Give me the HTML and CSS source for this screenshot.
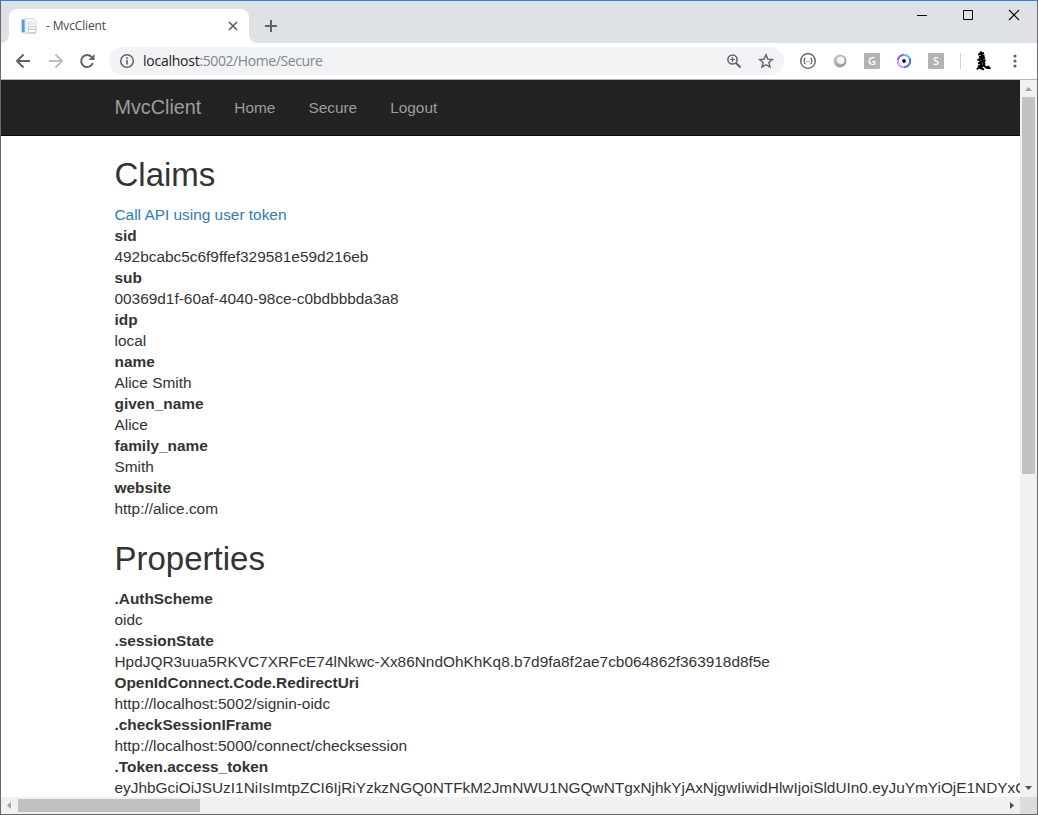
FILE: index.html
```
<!DOCTYPE html>
<html lang="en">
<head>
<meta charset="utf-8">
<title>- MvcClient</title>
<link rel="stylesheet" href="styles.css">
</head>
<body>
<div class="window">
  <header class="tabstrip">
    <div class="tab">
      <svg class="favicon" width="16" height="16" viewBox="0 0 16 16"><path d="M4 .5h8l3 3v12H4z" fill="#f5f8fa" stroke="#d3d8dd"/><path d="M0 1h4v14H0z" fill="#b9dcf4"/><path d="M1 2h2.500v12H1z" fill="#5a9bd1"/><path d="M6 4h5M6 6h7" stroke="#d3dce6"/><path d="M7.500 8.500h7v6h-7z" fill="#fff" stroke="#c5ccd3"/><path d="M8 11h6" stroke="#aebccb"/></svg>
      <span class="tab-title">- MvcClient</span>
      <svg class="tab-close" width="10" height="10" viewBox="0 0 10 10"><path d="M1 1l8 8M9 1L1 9" stroke="#5f6368" stroke-width="1.700"/></svg>
      <span class="tab-foot left"></span><span class="tab-foot right"></span>
    </div>
    <svg class="new-tab" width="14" height="14" viewBox="0 0 14 14"><path d="M7 1v12M1 7h12" stroke="#5f6368" stroke-width="2"/></svg>
    <svg class="controls" width="104" height="12" viewBox="0 0 104 12" fill="none" stroke="#000"><path d="M0 6.500h10"/><path d="M46.500 1.500h9v9h-9z"/><path d="M92 1l10 10M102 1L92 11" stroke-width="1.100"/></svg>
  </header>
  <div class="toolbar">
    <svg class="nav-icons" width="84" height="16" viewBox="0 0 84 16" fill="none" stroke="#5f6368" stroke-width="2"><path d="M15 8H2.500M8.500 1.500L2 8l6.500 6.500"/><path d="M34 8h12.500M40.500 1.500L47 8l-6.500 6.500" stroke="#babcbe"/><path d="M76.600 4A6 6 0 1 0 77.800 10"/><path d="M79.500 1v6h-6z" fill="#5f6368" stroke="none"/></svg>
    <div class="omnibox">
      <svg width="16" height="16" viewBox="0 0 16 16"><circle cx="8" cy="8" r="6.300" fill="none" stroke="#5f6368" stroke-width="1.500"/><path d="M8 7v4.500M8 4.300V6" stroke="#5f6368" stroke-width="1.600"/></svg>
      <span class="url"><b>localhost</b>:5002/Home/Secure</span>
      <svg width="16" height="16" viewBox="0 0 16 16" fill="none" stroke="#5f6368" stroke-width="1.500"><circle cx="6.500" cy="6.500" r="4.600"/><path d="M10 10l4.500 4.500" stroke-width="2"/><path d="M6.500 4v5M4 6.500h5" stroke-width="1.200"/></svg>
      <svg class="star" width="16" height="16" viewBox="0 0 16 16"><path d="M8 1.800l1.800 4.300 4.600.4-3.500 3 1.100 4.600L8 11.700l-4 2.400 1.100-4.600-3.500-3 4.600-.4z" fill="none" stroke="#5f6368" stroke-width="1.400"/></svg>
    </div>
    <div class="extensions">
      <svg width="16" height="16" viewBox="0 0 16 16" fill="none" stroke="#50545a"><circle cx="8" cy="8" r="7.300" stroke-width="1.300"/><path d="M5.500 5Q4.500 5 4.500 6.500T3.500 8Q4.500 8 4.500 9.500T5.500 11M10.500 5Q11.500 5 11.500 6.500T12.500 8Q11.500 8 11.500 9.500T10.500 11" stroke-width="1.200"/><path d="M6 8.500h4" stroke-dasharray="1 .5" stroke="#999"/></svg>
      <svg width="16" height="16" viewBox="0 0 16 16"><defs><linearGradient id="ball" x2="1" y2="1"><stop stop-color="#cfcfcf"/><stop offset="1" stop-color="#8a8a8a"/></linearGradient></defs><circle cx="8" cy="8" r="6.500" fill="url(#ball)"/><circle cx="8.700" cy="7.300" r="3.900" fill="#f4f4f4"/><path d="M4.800 7.300a3.900 3.900 0 0 0 5.500 3.600A4.600 4.600 0 0 1 4.800 7.300" fill="#aaa"/></svg>
      <span class="ext-letter">G</span>
      <svg width="16" height="16" viewBox="0 0 16 16" fill="none" stroke-width="1.800"><circle cx="8" cy="8" r="6.200" fill="#fff" stroke="#7f7cf6"/><path d="M8 14.200A6.200 6.200 0 0 1 1.900 7" stroke="#e3a0fa"/><path d="M1.900 7A6.200 6.200 0 0 1 7 1.900" stroke="#9b5cf6"/><path d="M8 1.800A6.200 6.200 0 0 1 13.600 5.300" stroke="#62c4fa"/><path d="M13.600 5.300A6.200 6.200 0 0 1 8 14.200" stroke="#5c6ff5"/><circle cx="8" cy="8" r="1.900" fill="#111"/></svg>
      <span class="ext-letter">S</span>
    </div>
    <span class="divider"></span>
    <svg class="avatar" width="16" height="20" viewBox="0 0 16 20" fill="none" stroke="#000" stroke-width="1.900"><path d="M6.500.5L4 4M3 3.500l6-1.500M4 6l5.500-1.500M2.500 9L10 6.500M7 3v6M4 8l1.500 2.500L10 9M3 12.500l6.500-2.500-1 3 1.500 2.500q2 2 4.500 1.500l-2-2M7 10.500L5.500 14 2 18.500M3 15.500l6-1.500M6.500 14v5M4 16.500l5 2M10 12l-3 4"/></svg>
    <svg class="menu" width="4" height="14" viewBox="0 0 4 14" fill="#5f6368"><circle cx="2" cy="2" r="1.600"/><circle cx="2" cy="7" r="1.600"/><circle cx="2" cy="12" r="1.600"/></svg>
  </div>
  <div class="viewport">
    <div class="page">
      <nav class="navbar"><a class="brand">MvcClient</a><a class="link">Home</a><a class="link">Secure</a><a class="link">Logout</a></nav>
      <main class="content">
        <h2>Claims</h2>
        <a class="api">Call API using user token</a>
        <dl>
          <dt>sid</dt><dd>492bcabc5c6f9ffef329581e59d216eb</dd>
          <dt>sub</dt><dd>00369d1f-60af-4040-98ce-c0bdbbbda3a8</dd>
          <dt>idp</dt><dd>local</dd>
          <dt>name</dt><dd>Alice Smith</dd>
          <dt>given_name</dt><dd>Alice</dd>
          <dt>family_name</dt><dd>Smith</dd>
          <dt>website</dt><dd>http://alice.com</dd>
        </dl>
        <h2 class="second">Properties</h2>
        <dl>
          <dt>.AuthScheme</dt><dd>oidc</dd>
          <dt>.sessionState</dt><dd>HpdJQR3uua5RKVC7XRFcE74lNkwc-Xx86NndOhKhKq8.b7d9fa8f2ae7cb064862f363918d8f5e</dd>
          <dt>OpenIdConnect.Code.RedirectUri</dt><dd>http://localhost:5002/signin-oidc</dd>
          <dt>.checkSessionIFrame</dt><dd>http://localhost:5000/connect/checksession</dd>
          <dt>.Token.access_token</dt><dd>eyJhbGciOiJSUzI1NiIsImtpZCI6IjRiYzkzNGQ0NTFkM2JmNWU1NGQwNTgxNjhkYjAxNjgwIiwidHlwIjoiSldUIn0.eyJuYmYiOjE1NDYxO</dd>
        </dl>
      </main>
    </div>
    <div class="scroll-y"><i class="arrow up"></i><span class="thumb"></span><i class="arrow down"></i></div>
    <div class="scroll-x"><i class="arrow back"></i><span class="thumb"></span><i class="arrow forward"></i></div>
    <div class="corner"></div>
  </div>
</div>
</body>
</html>
```
FILE: styles.css
```
* { box-sizing: border-box; }
body { margin: 0; overflow: hidden; }
svg { display: block; flex: none; }
.window { width: 1038px; height: 815px; display: flex; flex-direction: column; border: 1px solid #69696b; border-top-color: #3580d8; background: #fff; }
.tabstrip { height: 42px; flex: none; display: flex; background: #dee1e6; padding: 8px 0 0 8px; }
.tab { position: relative; width: 240px; height: 34px; background: #fff; border-radius: 8px 8px 0 0; display: flex; align-items: center; padding: 0 11px 0 12px; }
.tab-title { flex: 1; margin-left: 9px; padding-bottom: 1px; font: 12px "Open Sans", sans-serif; color: #45494d; letter-spacing: -.15px; }
.tab-foot { position: absolute; bottom: 0; width: 8px; height: 8px; }
.tab-foot.left { left: -8px; background: radial-gradient(circle at 0 0, transparent 7.5px, #fff 8px); }
.tab-foot.right { right: -8px; background: radial-gradient(circle at 100% 0, transparent 7.5px, #fff 8px); }
.new-tab { margin: 10px 0 0 15px; }
.controls { margin: 0 16px 0 auto; }
.toolbar { height: 37px; flex: none; display: flex; align-items: center; border-bottom: 1px solid #b5b5b5; padding: 0 20px 0 14px; }
.omnibox { width: 675px; height: 28px; margin-left: 10px; padding: 0 10px; border-radius: 14px; background: #f1f3f4; display: flex; align-items: center; }
.url { flex: 1; margin-left: 8px; padding-bottom: 1px; font: 14px "Open Sans", sans-serif; color: #80868b; letter-spacing: -.4px; }
.url b { font-weight: 400; color: #202124; letter-spacing: -.25px; }
.star { margin-left: 16px; }
.extensions { display: flex; gap: 16px; margin-left: 16px; }
.ext-letter { width: 16px; height: 16px; border-radius: 1px; background: #b3b3b3; color: #fff; font: 600 11px/16px "Open Sans", sans-serif; text-align: center; }
.divider { width: 1px; height: 16px; margin-left: 16px; background: #cfd1d4; }
.avatar { margin-left: 14px; }
.menu { margin-left: auto; }
.viewport { flex: 1; min-height: 0; display: grid; grid-template: minmax(0, 1fr) 17px / minmax(0, 1fr) 17px; font-family: "Liberation Sans", Arial, sans-serif; }
.page { overflow: hidden; font-size: 15.4px; line-height: 21px; color: #333; }
.navbar { height: 56px; background: #222; border-bottom: 1px solid #080808; display: flex; align-items: center; padding-left: 113.5px; color: #9d9d9d; }
.brand { font-size: 19.8px; margin-right: 33px; }
.link { margin-right: 33px; }
.content { padding-left: 113.5px; white-space: nowrap; }
h2 { margin: 0; padding: 21px 0 11px; font-size: 33px; font-weight: 400; line-height: 36px; }
.second { padding-top: 22px; }
.api { display: block; color: #337ab7; }
dl { margin: 0; }
dt { font-weight: 700; }
dd { margin: 0; }
.scroll-y, .scroll-x { display: flex; align-items: center; background: #f1f1f1; }
.scroll-y { flex-direction: column; }
.thumb { background: #c1c1c1; }
.scroll-y .thumb { width: 13px; height: 377px; }
.scroll-x .thumb { width: 182px; height: 13px; }
.arrow { width: 17px; height: 17px; flex: none; background: #a3a3a3; }
.up { clip-path: polygon(5px 11px, 12px 11px, 8.5px 7px); }
.down { margin-top: auto; background: #505050; clip-path: polygon(5px 6px, 12px 6px, 8.5px 10px); }
.back { clip-path: polygon(10px 5px, 10px 12px, 6px 8.5px); }
.forward { margin-left: auto; background: #505050; clip-path: polygon(7px 5px, 7px 12px, 11px 8.5px); }
.corner { background: #dcdcdc; }
```
